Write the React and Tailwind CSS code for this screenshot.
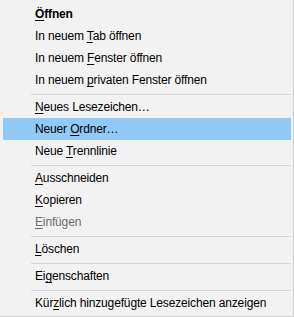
const items = [
  { pre: '', key: 'Ö', post: 'ffnen', bold: true },
  { pre: 'In neuem ', key: 'T', post: 'ab öffnen' },
  { pre: 'In neuem ', key: 'F', post: 'enster öffnen' },
  { pre: 'In neuem ', key: 'p', post: 'rivaten Fenster öffnen' },
  'sep',
  { pre: '', key: 'N', post: 'eues Lesezeichen…' },
  { pre: 'Neuer ', key: 'O', post: 'rdner…', active: true },
  { pre: 'Neue ', key: 'T', post: 'rennlinie' },
  'sep',
  { pre: '', key: 'A', post: 'usschneiden' },
  { pre: '', key: 'K', post: 'opieren' },
  { pre: '', key: 'E', post: 'infügen', disabled: true },
  'sep',
  { pre: '', key: 'L', post: 'öschen' },
  'sep',
  { pre: 'Ei', key: 'g', post: 'enschaften' },
  'sep',
  { pre: 'Kür', key: 'z', post: 'lich hinzugefügte Lesezeichen anzeigen' },
];

function Row({ item }) {
  const color = item.disabled ? 'text-[#6d6d6d]' : 'text-black';
  return (
    <div
      className={`h-[22px] pl-[32px] leading-[22px] whitespace-nowrap ${color} ${
        item.active ? 'bg-[#91c9f7]' : ''
      } ${item.bold ? 'font-bold' : ''}`}
    >
      {item.pre}
      <span className="underline underline-offset-2">{item.key}</span>
      {item.post}
    </div>
  );
}

export default function App() {
  return (
    <div
      className="w-[294px] h-[317px] bg-[#f2f2f2] border-r border-b border-[#cccccc] pt-[3px] pl-[3px] pr-[2px] text-[12px] tracking-[-0.15px]"
      style={{ fontFamily: '"Segoe UI", "Liberation Sans", Arial, sans-serif' }}
    >
      {items.map((item, i) =>
        item === 'sep' ? (
          <div key={i} className="h-[5px] pl-[28px] pt-[3px]">
            <div className="h-px bg-[#d7d7d7]" />
          </div>
        ) : (
          <Row key={i} item={item} />
        )
      )}
    </div>
  );
}
